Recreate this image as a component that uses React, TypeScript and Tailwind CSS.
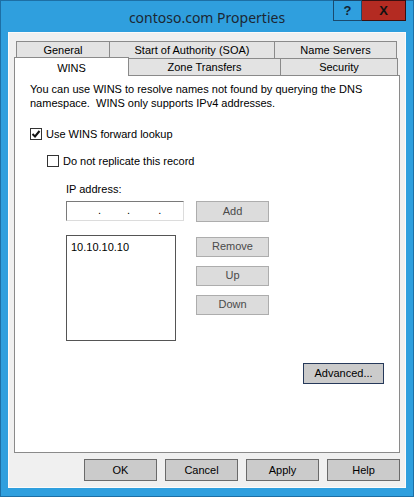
import React, { useState } from 'react';

const font = { fontFamily: '"Liberation Sans", Arial, sans-serif' };

const Btn: React.FC<{ label: string; className?: string; def?: boolean; disabled?: boolean }> = ({ label, className = '', def, disabled }) => (
  <button
    type="button"
    className={`flex items-center justify-center text-[11px] leading-none border ${
      disabled
        ? 'bg-[#dcdcdc] border-[#adadad] text-[#4a4a4a]'
        : def
        ? 'bg-[#cbcbcb] border-[#26395a] text-black'
        : 'bg-[#cbcbcb] border-[#6a6a6a] text-black'
    } ${className}`}
  >
    {label}
  </button>
);

const CheckBox: React.FC<{ checked: boolean; onChange: () => void; label: string; className?: string }> = ({ checked, onChange, label, className = '' }) => (
  <label className={`flex items-center gap-[4px] cursor-default ${className}`} onClick={onChange}>
    <span className="w-[12px] h-[12px] border border-[#333] bg-white flex items-center justify-center">
      {checked && (
        <svg width="10" height="10" viewBox="0 0 10 10">
          <path d="M1.5 5 L4 7.5 L8.5 2" stroke="#111" strokeWidth="2" fill="none" />
        </svg>
      )}
    </span>
    <span className="text-[11px] text-black">{label}</span>
  </label>
);

export default function App() {
  const [useWins, setUseWins] = useState(true);
  const [noReplicate, setNoReplicate] = useState(false);

  return (
    <div className="w-[414px] h-[497px] bg-[#2f9fde] border border-[#1d6fa5] flex flex-col" style={font}>
      {/* Title bar */}
      <div className="relative h-[31px] flex items-center justify-center">
        <span className="text-[14px] text-[#1c2733] mt-[1px]" style={{ fontFamily: '"Noto Sans", "Open Sans", sans-serif' }}>
          contoso.com Properties
        </span>
        <div className="absolute right-[7px] -top-px flex">
          <div className="w-[29px] h-[21px] border border-[#1a4a6e] bg-[#2f9fde] flex items-center justify-center text-[13px] font-bold text-[#142434]">?</div>
          <div className="w-[44px] h-[21px] border border-[#3a1010] border-l-0 bg-[#b42b22] flex items-center justify-center text-[13px] font-bold text-[#111]">X</div>
        </div>
      </div>

      {/* Client area */}
      <div className="mx-[7px] h-[456px] bg-[#f0f0f0] border border-[#fbfbfb] flex flex-col">
        {/* Tabs */}
        <div className="pt-[8px] pl-[5px] text-[11px] text-black">
          <div className="flex ml-[2px] h-[17px]">
            <div className="w-[94px] border border-[#8a8a8a] border-b-0 bg-[#e3e3e3] flex items-center justify-center">General</div>
            <div className="w-[165px] border border-[#8a8a8a] border-b-0 border-l-0 bg-[#e3e3e3] flex items-center justify-center">Start of Authority (SOA)</div>
            <div className="w-[122px] border border-[#8a8a8a] border-b-0 border-l-0 bg-[#e3e3e3] flex items-center justify-center">Name Servers</div>
          </div>
          <div className="flex h-[18px] items-end">
            <div className="w-[115px] h-[19px] -mt-px border border-[#8a8a8a] border-b-0 bg-white flex items-start pt-[2px] justify-center relative z-10">WINS</div>
            <div className="w-[152px] h-[18px] border border-[#8a8a8a] border-l-0 bg-[#e3e3e3] flex items-center justify-center">Zone Transfers</div>
            <div className="w-[117px] h-[18px] border border-[#8a8a8a] border-l-0 bg-[#e3e3e3] flex items-center justify-center">Security</div>
          </div>
        </div>

        {/* Panel */}
        <div className="ml-[5px] -mt-px w-[386px] h-[378px] bg-white border border-[#8a8a8a] text-[11px] text-black">
          <p className="ml-[15px] mt-[6px] leading-[14px]">
            You can use WINS to resolve names not found by querying the DNS
            <br />
            namespace.&nbsp; WINS only supports IPv4 addresses.
          </p>
          <CheckBox className="ml-[15px] mt-[16px]" checked={useWins} onChange={() => setUseWins(!useWins)} label="Use WINS forward lookup" />
          <CheckBox className="ml-[32px] mt-[10px]" checked={noReplicate} onChange={() => setNoReplicate(!noReplicate)} label="Do not replicate this record" />

          <div className="ml-[51px] mt-[12px]">IP address:</div>
          <div className="flex ml-[51px] mt-[3px] items-start">
            <div className="w-[118px] h-[20px] border border-[#7a7a7a] border-r-[#dcdcdc] border-b-[#dcdcdc] flex items-center">
              <span className="ml-[31px]">.</span>
              <span className="ml-[26px]">.</span>
              <span className="ml-[28px]">.</span>
            </div>
            <Btn disabled label="Add" className="ml-[12px] w-[73px] h-[21px]" />
          </div>

          <div className="flex ml-[51px] mt-[13px] items-start">
            <div className="w-[110px] h-[106px] border border-[#555] px-[4px] py-[3px]">10.10.10.10</div>
            <div className="ml-[20px] flex flex-col gap-[9px] mt-[2px]">
              <Btn disabled label="Remove" className="w-[73px] h-[20px]" />
              <Btn disabled label="Up" className="w-[73px] h-[20px]" />
              <Btn disabled label="Down" className="w-[73px] h-[20px]" />
            </div>
          </div>

          <div className="flex justify-end mr-[15px] mt-[22px]">
            <Btn def label="Advanced..." className="w-[81px] h-[21px]" />
          </div>
        </div>

        {/* Bottom buttons */}
        <div className="flex justify-end gap-[8px] mt-[6px] mr-[5px]">
          <Btn label="OK" className="w-[73px] h-[22px]" />
          <Btn label="Cancel" className="w-[73px] h-[22px]" />
          <Btn label="Apply" className="w-[73px] h-[22px]" />
          <Btn label="Help" className="w-[73px] h-[22px]" />
        </div>
      </div>
    </div>
  );
}
